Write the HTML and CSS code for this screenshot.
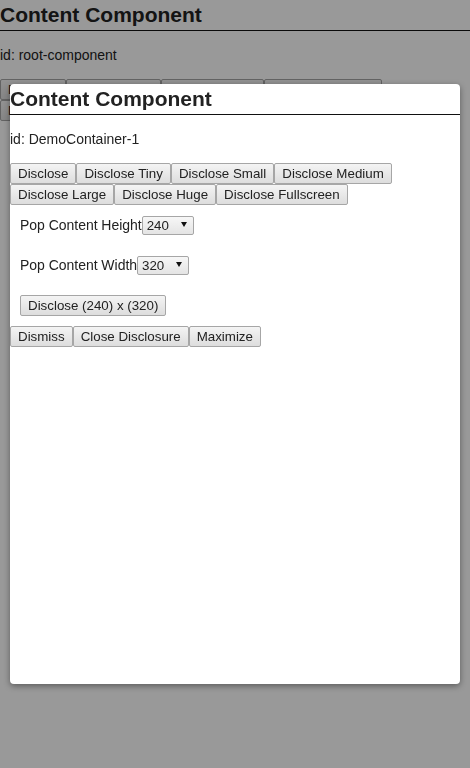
FILE: index.html
```html
<!DOCTYPE html>
<html>
<head>
<meta charset="utf-8">
<link rel="stylesheet" href="styles.css">
</head>
<body>
<div class="component root">
  <div class="title">Content Component</div>
  <div class="ident">id: root-component</div>
  <div class="btnrow">
    <button class="btn">Disclose</button><button class="btn">Disclose Tiny</button><button class="btn">Disclose Small</button><button class="btn">Disclose Medium</button><button class="btn">Disclose Large</button><button class="btn">Disclose Huge</button><button class="btn">Disclose Fullscreen</button>
  </div>
</div>
<div class="overlay"></div>
<div class="panel">
  <div class="component">
    <div class="title">Content Component</div>
    <div class="ident">id: DemoContainer-1</div>
    <div class="btnrow">
      <button class="btn">Disclose</button><button class="btn">Disclose Tiny</button><button class="btn">Disclose Small</button><button class="btn">Disclose Medium</button><button class="btn">Disclose Large</button><button class="btn">Disclose Huge</button><button class="btn">Disclose Fullscreen</button>
    </div>
    <div class="field">
      <span class="label">Pop Content Height</span><span class="sel"><select><option>240</option></select></span>
    </div>
    <div class="field">
      <span class="label">Pop Content Width</span><span class="sel"><select><option>320</option></select></span>
    </div>
    <div class="field field-btn">
      <button class="btn">Disclose (240) x (320)</button>
    </div>
    <div class="btnrow">
      <button class="btn">Dismiss</button><button class="btn">Close Disclosure</button><button class="btn">Maximize</button>
    </div>
  </div>
</div>
</body>
</html>
```
FILE: styles.css
```css
html, body {
  margin: 0;
  padding: 0;
  background: #ffffff;
  font-family: "Liberation Sans", Arial, sans-serif;
  color: #222222;
}
.component {
  font-family: "Liberation Sans", Arial, sans-serif;
}
.title {
  font-weight: bold;
  font-size: 21px;
  line-height: 30px;
  height: 30px;
  border-bottom: 1px solid #111111;
  white-space: nowrap;
}
.ident {
  font-size: 14px;
  line-height: 16px;
  padding: 16px 0;
}
.btnrow {
  display: flex;
  flex-wrap: wrap;
}
.btn {
  font-family: "Liberation Sans", Arial, sans-serif;
  font-size: 13.3333px;
  line-height: 15px;
  height: 21px;
  padding: 2px 7px;
  margin: 0;
  border: 1px solid #a6a6a6;
  border-radius: 2px;
  background: linear-gradient(#f4f4f4, #dddddd);
  color: #222222;
  white-space: nowrap;
  box-sizing: border-box;
}
.field {
  display: flex;
  align-items: center;
  padding: 10px;
  height: 20px;
  font-size: 14px;
}
.field-btn {
  height: 21px;
}
.label {
  line-height: 16px;
  letter-spacing: -0.03px;
}
.sel {
  position: relative;
  display: inline-block;
  height: 19px;
}
.sel select {
  appearance: none;
  -webkit-appearance: none;
  font-family: "Liberation Sans", Arial, sans-serif;
  font-size: 13.3333px;
  width: 52px;
  height: 19px;
  padding: 0 0 0 4px;
  margin: 0;
  border: 1px solid #a6a6a6;
  border-radius: 2px;
  background: linear-gradient(#f7f7f7, #e4e4e4);
  color: #222222;
  box-sizing: border-box;
  display: block;
}
.sel::after {
  content: "";
  position: absolute;
  right: 7px;
  top: 6px;
  width: 0;
  height: 0;
  border-left: 3px solid transparent;
  border-right: 3px solid transparent;
  border-top: 5px solid #111111;
  pointer-events: none;
}
.overlay {
  position: fixed;
  left: 0;
  top: 0;
  right: 0;
  bottom: 0;
  background: rgba(0, 0, 0, 0.4);
}
.panel {
  position: absolute;
  left: 10px;
  top: 84px;
  width: 450px;
  height: 600px;
  background: #ffffff;
  border-radius: 4px;
  box-shadow: 0 2px 6px rgba(0, 0, 0, 0.4);
  overflow: hidden;
}
```
